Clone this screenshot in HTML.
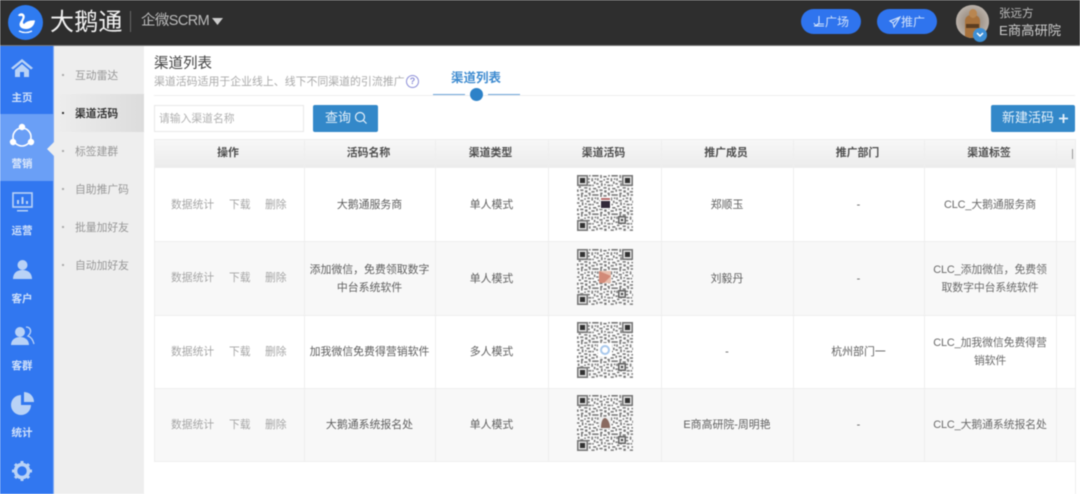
<!DOCTYPE html>
<html lang="zh"><head><meta charset="utf-8"><style>
html,body{margin:0;padding:0;background:#fff}
#p{position:relative;width:1080px;height:494px;overflow:hidden;background:#fff;font-family:"Liberation Sans","Noto Sans CJK SC",sans-serif;filter:blur(.6px)}
#p div,#p span.a{position:absolute;box-sizing:border-box}
.c{text-align:center;white-space:nowrap}
.t{color:#5f5f5f;font-size:10.9px;line-height:18px;text-align:center}
.l{letter-spacing:-.12px;color:#6a6a6a}
.o{color:#a6a6a6;font-size:10.8px;line-height:14px;white-space:nowrap}
.m{color:#969696;font-size:10.8px;line-height:14px;white-space:nowrap;left:75px}
.d{left:62px;width:2px;height:2px;background:#aaa}
.nl{left:0;width:44px;text-align:center;color:#cfe0fa;font-size:10.5px;line-height:14px;font-weight:bold}
.th{color:#4f4f4f;font-size:10.9px;line-height:14px;top:146px;text-align:center;font-weight:bold}
.v{top:139px;width:1px;height:322px;background:#eeeeee}
.h{left:154px;width:921px;height:1px;background:#eeeeee}
</style></head><body><div id="p">
<svg width="0" height="0" style="position:absolute"><defs>
<pattern id="q" width="24" height="24" patternUnits="userSpaceOnUse" patternTransform="scale(.8)">
<rect width="24" height="24" fill="#fff"/>
<path fill="#777" d="M0 0h3v2H0zM5 0h2v4H5zM9 1h4v2H9zM15 0h2v2h-2zM19 0h5v2h-5zM1 4h2v3H1zM9 5h2v2H9zM13 4h3v2h-3zM18 4h2v4h-2zM22 4h2v2h-2zM4 7h4v2H4zM12 8h4v2h-4zM21 8h2v3h-2zM0 10h3v2H0zM6 10h2v4H6zM10 11h2v2h-2zM14 12h4v2h-4zM19 12h2v2h-2zM2 14h3v2H2zM9 15h4v2H9zM15 16h2v3h-2zM20 16h4v2h-4zM0 18h2v3H0zM4 18h4v2H4zM10 19h3v3h-3zM18 20h4v2h-4zM5 22h3v2H5zM14 22h3v2h-3z"/>
</pattern>
<g id="f"><rect width="11" height="11" fill="#777"/><rect x="1.500" y="1.500" width="8" height="8" fill="#ddd"/><rect x="3" y="3" width="5" height="5" fill="#333"/></g>
<g id="s"><rect width="8" height="8" fill="#666"/><rect x="1.500" y="1.500" width="5" height="5" fill="#ddd"/><rect x="3" y="3" width="2" height="2" fill="#444"/></g>
</defs></svg>

<!-- header -->
<div style="left:0;top:0;width:1080px;height:46px;background:#2e2e2e;border-bottom:1px solid #777"></div>
<div style="left:8px;top:5px;width:35px;height:35px;border-radius:50%;background:#2f7bf0"></div>
<svg style="position:absolute;left:8px;top:5px" width="35" height="35" viewBox="0 0 35 35"><path d="M10 10.500c1-2.500 4.500-3 6-1 1.500 2 .5 4-.5 6-.8 1.600-.8 3 .5 3.500 2.500-2.500 6-4 11-3.500-.5 5-4 8.500-9 8.500-4 0-6.500-2-6.500-4.500 0-2.500 3-5.500 3-7.500 0-1.200-1.500-1.500-2.500-.8z" fill="#fff"/><path d="M11 26c4 2 9 2 13 0" stroke="#fff" stroke-width="1.300" fill="none"/></svg>
<div class="c" style="left:50px;top:7px;font-size:24px;line-height:32px;color:#f2f2f2;letter-spacing:.2px">大鹅通</div>
<div style="left:130px;top:11px;width:1px;height:21px;background:#666"></div>
<div class="c" style="left:141px;top:11px;font-size:14.5px;line-height:20px;color:#bbb;letter-spacing:-.6px">企微SCRM</div>
<svg style="position:absolute;left:212px;top:17px" width="11" height="9"><path d="M0 1h11L5.500 8z" fill="#ccc"/></svg>

<div style="left:801px;top:9px;width:60px;height:25px;border-radius:13px;background:#2f74ee"></div>
<svg style="position:absolute;left:813px;top:15px" width="12" height="13" viewBox="0 0 12 13"><path d="M6 1v6a2.500 2.500 0 0 1-5 1M4 9h7M1 11h10" stroke="#cfe0fa" stroke-width="1.100" fill="none"/></svg>
<div class="c" style="left:825px;top:14px;font-size:12px;line-height:16px;color:#cfe0fa">广场</div>
<div style="left:877px;top:9px;width:60px;height:25px;border-radius:13px;background:#2f74ee"></div>
<svg style="position:absolute;left:889px;top:16px" width="12" height="12" viewBox="0 0 12 12"><path d="M11 1 1 5l3 2 1 4 2-3zM4 7l7-6" stroke="#cfe0fa" stroke-width="1.100" fill="none"/></svg>
<div class="c" style="left:901px;top:14px;font-size:12px;line-height:16px;color:#cfe0fa">推广</div>

<div style="left:956px;top:5px;width:33px;height:33px;border-radius:50%;background:#b5aea8;overflow:hidden">
<div style="left:0;top:0;width:33px;height:33px;background:radial-gradient(circle at 50% 50%,#8a7a6a,#bdb5ae 75%)"></div>
<div style="left:9px;top:10px;width:15px;height:23px;background:#a8723c;border-radius:6px 6px 2px 2px"></div>
<div style="left:12.500px;top:4px;width:8px;height:9px;background:#b98650;border-radius:50%"></div>
<div style="left:10px;top:19px;width:13px;height:4px;background:#5c3d20"></div>
</div>
<div style="left:973px;top:28px;width:14px;height:14px;border-radius:50%;background:#3d8fd6"></div>
<svg style="position:absolute;left:976px;top:32px" width="8" height="6"><path d="M1 1l3 3 3-3" stroke="#fff" stroke-width="1.500" fill="none"/></svg>
<div class="c" style="left:999px;top:6px;font-size:11.5px;line-height:16px;color:#bbb">张远方</div>
<div class="c" style="left:999px;top:22px;font-size:13.300px;line-height:18px;color:#ccc">E商高研院</div>

<!-- nav -->
<div style="left:0;top:46px;width:54px;height:448px;background:#3177f0;border-right:1px solid #7fa9f4"></div>
<div style="left:0;top:114px;width:53px;height:67px;background:#6a9ff6"></div>
<svg style="position:absolute;left:47px;top:142px" width="7" height="14"><path d="M7 0v14L0 7z" fill="#eee"/></svg>
<svg style="position:absolute;left:10px;top:58px" width="24" height="20" viewBox="0 0 24 20"><path d="M1 10 12 1l11 9-2 1.500L12 4 3 11.500z" fill="#b9d2f6"/><path d="M5 12l7-6 7 6v7h-5v-5h-4v5H5z" fill="#b9d2f6"/></svg>
<div class="nl" style="top:91px">主页</div>
<svg style="position:absolute;left:9px;top:123px" width="26" height="26" viewBox="0 0 26 26"><circle cx="13" cy="14" r="9" stroke="#fff" stroke-width="1.600" fill="none"/><circle cx="13" cy="4" r="3.200" fill="#fff"/><circle cx="4" cy="19" r="3.200" fill="#fff"/><circle cx="22" cy="19" r="3.200" fill="#fff"/></svg>
<div class="nl" style="top:157px;color:#dce8fb">营销</div>
<svg style="position:absolute;left:12px;top:192px" width="21" height="21" viewBox="0 0 21 21"><rect x="1" y="1" width="19" height="14" fill="none" stroke="#b9d2f6" stroke-width="1.600"/><path d="M5 12V8h2v4zM9.500 12V5h2v7zM14 12V9h2v3zM5 18h11v1.500H5z" fill="#b9d2f6"/></svg>
<div class="nl" style="top:224px">运营</div>
<svg style="position:absolute;left:12px;top:259px" width="21" height="21" viewBox="0 0 21 21"><circle cx="10.500" cy="6" r="5" fill="#b9d2f6"/><path d="M1 20c0-6 4-9 9.500-9s9.500 3 9.500 9z" fill="#b9d2f6"/></svg>
<div class="nl" style="top:292px">客户</div>
<svg style="position:absolute;left:11px;top:326px" width="24" height="21" viewBox="0 0 24 21"><circle cx="9" cy="6" r="5" fill="#b9d2f6"/><path d="M0 19c0-5 4-8 9-8s9 3 9 8z" fill="#b9d2f6"/><path d="M15 1c3 0 5 2 4.500 5-.3 2-1.500 3-2.500 4 3 1 5 4 6 8" stroke="#b9d2f6" stroke-width="1.300" fill="none"/></svg>
<div class="nl" style="top:359px">客群</div>
<svg style="position:absolute;left:11px;top:392px" width="23" height="23" viewBox="0 0 23 23"><path d="M10 3a10 10 0 1 0 10 10H10z" fill="#b9d2f6"/><path d="M13 0a10 10 0 0 1 10 10H13z" fill="#b9d2f6"/></svg>
<div class="nl" style="top:426px">统计</div>
<svg style="position:absolute;left:11px;top:460px" width="22" height="22" viewBox="0 0 22 22"><circle cx="11" cy="11" r="6.500" fill="none" stroke="#b9d2f6" stroke-width="3.500"/><path d="M11 1v3M11 18v3M1 11h3M18 11h3M4 4l2 2M16 16l2 2M18 4l-2 2M6 16l-2 2" stroke="#b9d2f6" stroke-width="3"/></svg>

<!-- submenu -->
<div style="left:54px;top:46px;width:90px;height:448px;background:#eeeeee"></div>
<div style="left:54px;top:94px;width:90px;height:38px;background:linear-gradient(90deg,#eee,#dcdcdc)"></div>
<div class="d" style="top:74px"></div><div class="m" style="top:69px">互动雷达</div>
<div class="d" style="top:112px;background:#333"></div><div class="m" style="top:107px;color:#333;font-weight:bold">渠道活码</div>
<div class="d" style="top:150px"></div><div class="m" style="top:145px">标签建群</div>
<div class="d" style="top:188px"></div><div class="m" style="top:183px">自助推广码</div>
<div class="d" style="top:226px"></div><div class="m" style="top:221px">批量加好友</div>
<div class="d" style="top:264px"></div><div class="m" style="top:259px">自动加好友</div>

<!-- title -->
<div class="c" style="left:154px;top:55px;font-size:14.500px;line-height:18px;color:#444">渠道列表</div>
<div class="c" style="left:154px;top:75px;font-size:10.900px;line-height:14px;color:#aaa">渠道活码适用于企业线上、线下不同渠道的引流推广</div>
<div style="left:406px;top:75px;width:13px;height:13px;border:1.300px solid #8d8fd8;border-radius:50%;color:#8d8fd8;font-size:9px;line-height:11px;text-align:center;font-weight:bold">?</div>
<div style="left:154px;top:95px;width:921px;height:1px;background:#eee"></div>
<div class="c" style="left:451px;top:70px;font-size:12.500px;line-height:16px;color:#3e8bd0;font-weight:bold">渠道列表</div>
<div style="left:433px;top:94px;width:32px;height:1px;background:#6ea6da"></div>
<div style="left:488px;top:94px;width:32px;height:1px;background:#6ea6da"></div>
<div style="left:470px;top:88px;width:13px;height:13px;border-radius:50%;background:#2d82c8"></div>

<!-- search -->
<div style="left:154px;top:105px;width:150px;height:27px;border:1px solid #e8e8e8;background:#fff"></div>
<div class="c" style="left:159px;top:112px;font-size:10.800px;line-height:14px;color:#b0b0b0">请输入渠道名称</div>
<div style="left:313px;top:105px;width:65px;height:27px;background:#3388c9;border-radius:2px"></div>
<div class="c" style="left:325px;top:110px;font-size:13px;line-height:16px;color:#e4f0fa">查询</div>
<svg style="position:absolute;left:354px;top:111px" width="14" height="14" viewBox="0 0 14 14"><circle cx="6" cy="6" r="4.500" stroke="#e4f0fa" stroke-width="1.200" fill="none"/><path d="M9.500 9.500l3 3" stroke="#e4f0fa" stroke-width="1.200"/></svg>
<div style="left:991px;top:105px;width:84px;height:27px;background:#3388c9;border-radius:2px"></div>
<div class="c" style="left:1002px;top:110px;font-size:13px;line-height:16px;color:#e4f0fa">新建活码</div>
<svg style="position:absolute;left:1058px;top:113px" width="11" height="11"><path d="M5.500 1v9M1 5.500h9" stroke="#e4f0fa" stroke-width="1.800"/></svg>

<!-- table -->
<div style="left:154px;top:139px;width:921px;height:28px;background:linear-gradient(#f8f8f8,#ececec)"></div>
<div style="left:154px;top:241px;width:921px;height:74px;background:#f8f8f8"></div>
<div style="left:154px;top:388px;width:921px;height:73px;background:#f8f8f8"></div>
<div class="h" style="top:139px"></div><div class="h" style="top:167px"></div><div class="h" style="top:241px"></div><div class="h" style="top:315px"></div><div class="h" style="top:388px"></div><div class="h" style="top:461px"></div>
<div class="v" style="left:154px"></div><div class="v" style="left:304px"></div><div class="v" style="left:435px"></div><div class="v" style="left:548px"></div><div class="v" style="left:661px"></div><div class="v" style="left:793px"></div><div class="v" style="left:924px"></div><div class="v" style="left:1056px"></div><div class="v" style="left:1075px;height:355px"></div>

<div class="th" style="left:153px;width:150px">操作</div>
<div class="th" style="left:303px;width:131px">活码名称</div>
<div class="th" style="left:434px;width:113px">渠道类型</div>
<div class="th" style="left:547px;width:113px">渠道活码</div>
<div class="th" style="left:660px;width:132px">推广成员</div>
<div class="th" style="left:792px;width:131px">推广部门</div>
<div class="th" style="left:923px;width:132px">渠道标签</div>
<div style="left:1072px;top:149px;width:1px;height:10px;background:#999"></div>

<!-- ops -->
<div class="o" style="left:171px;top:198px">数据统计</div><div class="o" style="left:229px;top:198px">下载</div><div class="o" style="left:265px;top:198px">删除</div>
<div class="o" style="left:171px;top:271px">数据统计</div><div class="o" style="left:229px;top:271px">下载</div><div class="o" style="left:265px;top:271px">删除</div>
<div class="o" style="left:171px;top:345px">数据统计</div><div class="o" style="left:229px;top:345px">下载</div><div class="o" style="left:265px;top:345px">删除</div>
<div class="o" style="left:171px;top:418px">数据统计</div><div class="o" style="left:229px;top:418px">下载</div><div class="o" style="left:265px;top:418px">删除</div>

<!-- row 1 -->
<div class="t" style="left:304px;width:131px;top:196px">大鹅通服务商</div>
<div class="t" style="left:435px;width:113px;top:196px">单人模式</div>
<div class="t" style="left:661px;width:132px;top:196px">郑顺玉</div>
<div class="t" style="left:793px;width:131px;top:196px">-</div>
<div class="t l" style="left:924px;width:132px;top:196px">CLC_大鹅通服务商</div>
<!-- row 2 -->
<div class="t" style="left:304px;width:131px;top:261px;padding:0 4px">添加微信，免费领取数字中台系统软件</div>
<div class="t" style="left:435px;width:113px;top:270px">单人模式</div>
<div class="t" style="left:661px;width:132px;top:270px">刘毅丹</div>
<div class="t" style="left:793px;width:131px;top:270px">-</div>
<div class="t l" style="left:924px;width:132px;top:261px;padding:0 8px">CLC_添加微信，免费领取数字中台系统软件</div>
<!-- row 3 -->
<div class="t" style="left:304px;width:131px;top:343px">加我微信免费得营销软件</div>
<div class="t" style="left:435px;width:113px;top:343px">多人模式</div>
<div class="t" style="left:661px;width:132px;top:343px">-</div>
<div class="t" style="left:793px;width:131px;top:343px">杭州部门一</div>
<div class="t l" style="left:924px;width:132px;top:334px;padding:0 8px">CLC_加我微信免费得营销软件</div>
<!-- row 4 -->
<div class="t" style="left:304px;width:131px;top:416px">大鹅通系统报名处</div>
<div class="t" style="left:435px;width:113px;top:416px">单人模式</div>
<div class="t" style="left:661px;width:132px;top:416px">E商高研院-周明艳</div>
<div class="t" style="left:793px;width:131px;top:416px">-</div>
<div class="t l" style="left:924px;width:132px;top:416px">CLC_大鹅通系统报名处</div>

<!-- QR -->
<svg style="position:absolute;left:577px;top:175px" width="56" height="56" viewBox="0 0 56 56"><rect width="56" height="56" fill="url(#q)"/><use href="#f" x="0" y="0"/><use href="#f" x="45" y="0"/><use href="#f" x="0" y="45"/><use href="#s" x="41" y="41"/><rect x="23" y="22" width="11" height="12" fill="#fff"/><rect x="24" y="26" width="9" height="7" fill="#332a3a"/><rect x="24" y="23" width="9" height="2" fill="#b56a6a"/></svg>
<svg style="position:absolute;left:577px;top:249px" width="56" height="56" viewBox="0 0 56 56"><rect width="56" height="56" fill="url(#q)"/><use href="#f" x="0" y="0"/><use href="#f" x="45" y="0"/><use href="#f" x="0" y="45"/><use href="#s" x="41" y="41"/><rect x="22" y="22" width="12" height="12" fill="#e8c0b0"/><path d="M22 22l12 5-7 7h-5z" fill="#d28a78"/></svg>
<svg style="position:absolute;left:577px;top:322px" width="56" height="56" viewBox="0 0 56 56"><rect width="56" height="56" fill="url(#q)"/><use href="#f" x="0" y="0"/><use href="#f" x="45" y="0"/><use href="#f" x="0" y="45"/><use href="#s" x="41" y="41"/><rect x="21" y="21" width="14" height="14" fill="#fff"/><circle cx="28" cy="28" r="4" fill="none" stroke="#a8c8ec" stroke-width="2"/></svg>
<svg style="position:absolute;left:577px;top:395px" width="56" height="56" viewBox="0 0 56 56"><rect width="56" height="56" fill="url(#q)"/><use href="#f" x="0" y="0"/><use href="#f" x="45" y="0"/><use href="#f" x="0" y="45"/><use href="#s" x="41" y="41"/><rect x="22" y="22" width="12" height="12" fill="#eee"/><path d="M24 33c0-7 2-10 4-10s5 4 5 10z" fill="#8a6a60"/></svg>
</div></body></html>
